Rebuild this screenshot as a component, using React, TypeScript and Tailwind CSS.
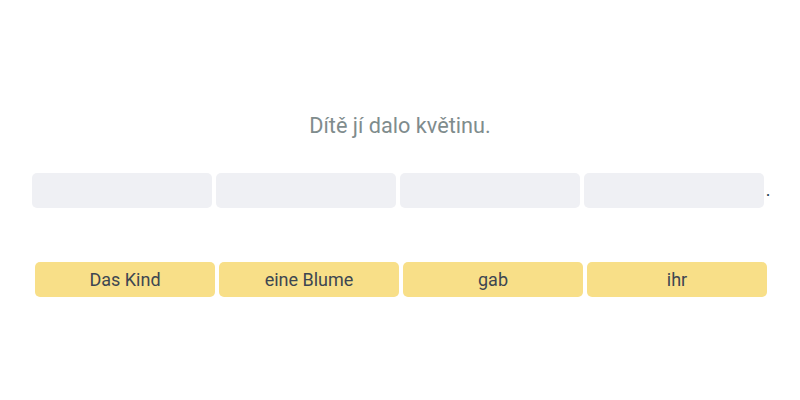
import React from "react";

export default function App() {
  const words = ["Das Kind", "eine Blume", "gab", "ihr"];
  return (
    <div className="w-[800px] h-[400px] bg-white flex flex-col items-center" style={{ fontFamily: "Roboto, sans-serif" }}>
      <div className="mt-[112px] h-[28px] text-[21.7px] leading-[28px] text-[#7f8c8d]">Dítě jí dalo květinu.</div>
      <div className="mt-[33px] flex items-end ml-[2px]">
        <div className="flex gap-[4px]">
          {[0, 1, 2, 3].map((i) => (
            <div key={i} className="w-[180px] h-[35px] rounded-[5px] bg-[#eff0f4]" />
          ))}
        </div>
        <span className="ml-[2px] mb-[9px] text-[18px] leading-[18px] text-[#2c3e50]">.</span>
      </div>
      <div className="mt-[54px] flex gap-[4px] ml-[2px]">
        {words.map((w) => (
          <div key={w} className="w-[180px] h-[35px] rounded-[5px] bg-[#f8df88] flex items-center justify-center text-[18px] text-[#3d4651]">
            {w}
          </div>
        ))}
      </div>
    </div>
  );
}
